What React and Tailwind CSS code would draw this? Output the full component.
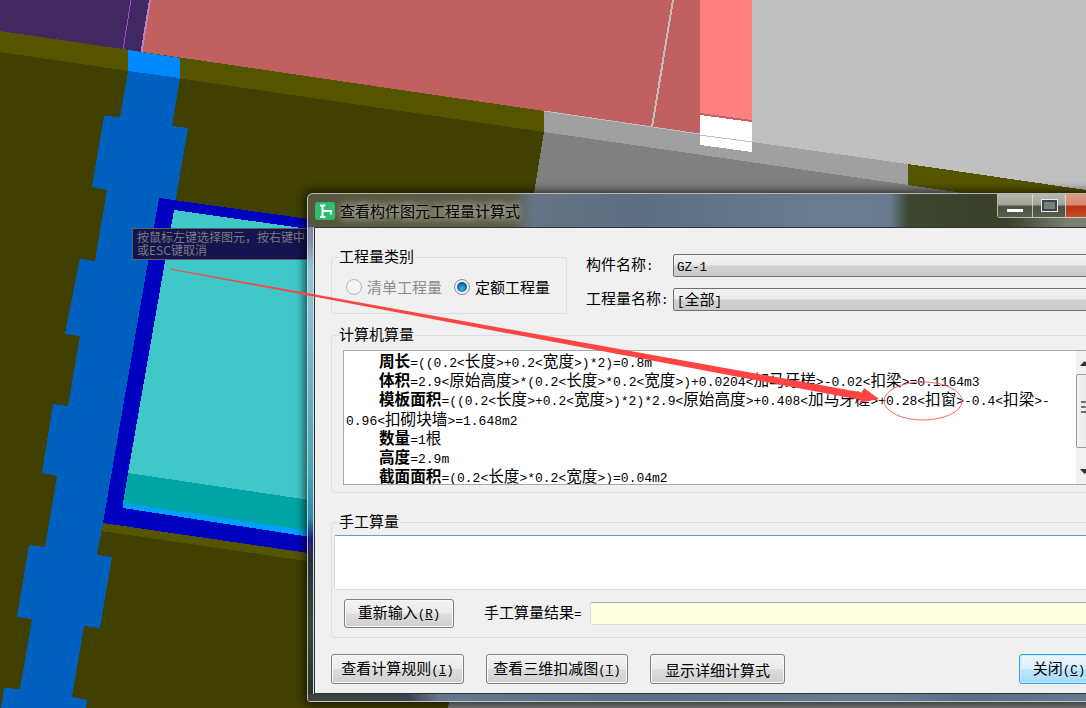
const CJK_FONT = "font-['Noto_Sans_CJK_SC','Noto_Sans',sans-serif]";

// latin runs are half the width of a hanzi, as in the old bitmap song face
function Txt({text, size = 'text-[12.5px]'}) {
  const parts = text.split(/([\x00-\x7f]+)/).filter(Boolean);
  return parts.map((part, i) =>
    /^[\x00-\x7f]/.test(part) ? (
      <span key={i} className={`font-['Liberation_Mono',monospace] font-normal ${size}`}>{part}</span>
    ) : (
      <span key={i}>{part}</span>
    ),
  );
}

function Scene() {
  return (
    <svg className="absolute inset-0" width="1086" height="708" viewBox="0 0 1086 708" shapeRendering="crispEdges">
      <rect width="1086" height="708" fill="#404000" />
      <polygon points="0,0 700,0 700,134 0,31" fill="#402860" />
      <polygon points="150,0 700,0 700,134 141,52" fill="#c06060" />
      <line x1="131" y1="0" x2="123" y2="50" stroke="#a050c0" strokeWidth="1" />
      <line x1="150" y1="0" x2="141.5" y2="52" stroke="#c080c0" strokeWidth="2" />
      <line x1="673" y1="0" x2="652" y2="127" stroke="#c0c0c0" strokeWidth="2" />
      <polygon points="0,31 544,111 544,132 0,52" fill="#555500" />
      <polygon points="700,0 752,0 752,120 700,113" fill="#ff8080" />
      <polygon points="700,113 752,120 752,122 700,115" fill="#c06060" />
      <polygon points="700,115 752,122 752,152 700,145" fill="#ffffff" />
      <line x1="700" y1="135" x2="752" y2="142" stroke="#c0c0c0" strokeWidth="1" />
      <polygon points="752,0 1086,0 1086,190 908,164 752,142" fill="#c0c0c0" />
      <polygon points="544,111 700,134 700,145 752,152 752,142 908,164 908,185 544,132" fill="#a0a0a0" />
      <line x1="544" y1="111" x2="700" y2="134" stroke="#c0c0c0" strokeWidth="1" />
      <polygon points="544,132 908,185 1086,211 1086,708 448,708 534,193" fill="#808080" />
      <polygon points="908,164 1086,190 1086,211 908,185" fill="#555500" />
      <polygon points="128,50 180,58 180,78 128,71" fill="#0088ff" />
      <polygon
        points="128,71 180,78 172,126 188,128 176,198 140,320 97,555 112,557 100,628 84,626 72,697 87,700 86,708 1,708 4,688 20,689 32,619 17,617 29,545 45,547 57,476 42,473 53,404 68,406 80,336 65,334 80,259 95,261 107,190 92,187 104,116 120,117"
        fill="#0060c0"
      />
      <polygon points="103,523 307,553 307,561 101,531" fill="#555500" />
      <polygon points="159,198 330,222 330,556 103,523" fill="#0000c0" />
      <polygon points="174,210 330,232 330,503 128,473" fill="#40c8c8" />
      <polygon points="128,473 330,503 330,534 123,503" fill="#00a4a4" />
      <polygon points="123,503 330,534 330,540 123,508" fill="#00a0ff" />
    </svg>
  );
}

function Overlay() {
  return (
    <svg className="absolute inset-0 pointer-events-none" width="1086" height="708" viewBox="0 0 1086 708">
      <polygon points="170,268.5 862,392.5 864,388 879,399 859,403 861,400 170,269.5" fill="#ff4444" />
      <ellipse cx="923" cy="401" rx="39" ry="19" fill="none" stroke="#ff6666" strokeWidth="1" />
    </svg>
  );
}

function Hint() {
  return (
    <div className={`absolute left-[132px] top-[228px] w-[240px] h-[32px] border border-[#606060] bg-[#141450] pl-1 pt-[1px] text-[12px] leading-[13px] text-[#7c7c7c] ${CJK_FONT}`}>
      <div className="whitespace-nowrap">按鼠标左键选择图元，按右键中</div>
      <div className="whitespace-nowrap">或ESC键取消</div>
    </div>
  );
}

function CaptionButtons() {
  return (
    <div className="absolute left-[689px] top-0 flex h-[24px] border border-t-0 border-[#e8ece4]/70 rounded-b-[3px]">
      <div className="flex w-[35px] items-end justify-center border-r border-[#e8ece4]/70 bg-[linear-gradient(180deg,#b4b8ac_0%,#a2a69a_45%,#4b5140_55%,#5a6050_100%)] pb-[5px]">
        <div className="h-[3px] w-[16px] bg-white" />
      </div>
      <div className="flex w-[33px] items-start justify-center border-r border-[#e8ece4]/70 bg-[linear-gradient(180deg,#b4b8ac_0%,#a2a69a_45%,#4b5140_55%,#5a6050_100%)] pt-[6px]">
        <div className="h-[11px] w-[15px] border-2 border-[#3c4658] bg-[#7b8272] outline outline-1 outline-[#e8ece8]" />
      </div>
      <div className="w-[50px] bg-[linear-gradient(180deg,#df9a86_0%,#d98a76_45%,#bb3210_55%,#c24e2a_100%)]" />
    </div>
  );
}

function Group({title, className, children}) {
  return (
    <fieldset className={`rounded-[3px] border border-[#d6e0e6] ${className}`}>
      <legend className="ml-[7px] h-[16px] pr-px text-[15px] leading-[13px]">{title}</legend>
      {children}
    </fieldset>
  );
}

function Button({children, className}) {
  return (
    <button className={`flex items-center justify-center rounded-[3px] border border-[#7f7f7f] bg-[linear-gradient(180deg,#f2f2f2_0%,#ebebeb_48%,#dddddd_52%,#cfcfcf_100%)] text-[15px] shadow-[inset_0_0_0_1px_#f8f8f8] ${className}`}>
      {children}
    </button>
  );
}

function Hotkey({label, letter}) {
  return (
    <span>
      {label}
      <span className="font-['Liberation_Mono',monospace] text-[12.5px]">
        (<u>{letter}</u>)
      </span>
    </span>
  );
}

function Radio({checked, disabled, label}) {
  return (
    <div className={`flex items-center gap-[5px] ${disabled ? 'text-[#8c8c8c]' : 'text-black'}`}>
      <span className={`flex h-[16px] w-[16px] items-center justify-center rounded-full border ${disabled ? 'border-[#b8b8b8] bg-[#f4f4f4]' : 'border-[#8a8f96] bg-[#eef2f5]'}`}>
        {checked && <span className="h-[10px] w-[10px] rounded-full bg-[radial-gradient(circle_at_50%_65%,#3cb8f0_0%,#0f6ea8_55%,#0c3f66_100%)]" />}
      </span>
      <span>{label}</span>
    </div>
  );
}

function Combo({label, value}) {
  return (
    <div className="flex items-center">
      <span className="w-[87px] shrink-0"><Txt text={label} /></span>
      <div className="h-[23px] flex-1 rounded-[2px] border border-[#707070] bg-[linear-gradient(180deg,#f2f2f2_0%,#ebebeb_48%,#d2d2d2_52%,#cacaca_100%)] pl-[3px] leading-[20px]">
        <Txt text={value} />
      </div>
    </div>
  );
}

const FORMULA = [
  {name: '周长', rest: '=((0.2<长度>+0.2<宽度>)*2)=0.8m'},
  {name: '体积', rest: '=2.9<原始高度>*(0.2<长度>*0.2<宽度>)+0.0204<加马牙槎>-0.02<扣梁>=0.1164m3'},
  {name: '模板面积', rest: '=((0.2<长度>+0.2<宽度>)*2)*2.9<原始高度>+0.408<加马牙槎>+0.28<扣窗>-0.4<扣梁>-'},
  {rest: '0.96<扣砌块墙>=1.648m2'},
  {name: '数量', rest: '=1根'},
  {name: '高度', rest: '=2.9m'},
  {name: '截面面积', rest: '=(0.2<长度>*0.2<宽度>)=0.04m2'},
];

function Scrollbar() {
  return (
    <div className="flex w-[17px] shrink-0 flex-col items-center bg-[#f2f2f2] pt-[10px]">
      <svg width="9" height="5" viewBox="0 0 9 5"><polygon points="4.5,0 9,5 0,5" fill="#303030" /></svg>
      <div className="mt-[8px] flex h-[74px] w-full flex-col justify-center gap-[3px] rounded-[2px] border border-[#9a9a9a] bg-[linear-gradient(90deg,#f4f4f4,#e4e4e4)] pb-[8px] pl-[4px]">
        <div className="h-[2px] w-[9px] bg-[#707070]" />
        <div className="h-[2px] w-[9px] bg-[#707070]" />
        <div className="h-[2px] w-[9px] bg-[#707070]" />
      </div>
      <svg className="mt-[21px]" width="9" height="5" viewBox="0 0 9 5"><polygon points="0,0 9,0 4.5,5" fill="#303030" /></svg>
    </div>
  );
}

function Dialog() {
  return (
    <div className={`absolute left-[307px] top-[193px] flex h-[509px] w-[825px] flex-col rounded-t-[6px] rounded-b-[4px] border border-[#d8dcdc]/80 text-[15px] leading-[19px] text-black shadow-[0_0_9px_3px_rgba(0,0,0,0.6)] ${CJK_FONT} bg-[linear-gradient(180deg,#6e6e96_0%,#8a8aa8_9%,#92c8d8_15%,#7ab8c8_30%,#4aa4b4_55%,#2e8aa0_64%,#1c2080_68%,#2a3038_72%,#3a4438_85%,#2a3228_100%)]`}>
      <div className="relative flex h-[33px] shrink-0 items-center gap-[5px] rounded-t-[5px] bg-[linear-gradient(90deg,#55563c_0px,#5c5c48_205px,#667484_225px,#5c6e84_330px,#6a7c90_520px,#677a8f_583px,#3d4630_600px,#3a4029_700px,#7a8070_760px)] pl-[7px]">
        <svg width="20" height="18" viewBox="0 0 20 18" className="shrink-0">
          <rect width="20" height="18" rx="3" fill="#2dbd70" />
          <path d="M7.5 3V15.5M5 3.5H10.5M5 15H10.5M7.5 9H16.5M16 8V12.5" stroke="#ffffff" strokeWidth="2" fill="none" />
        </svg>
        <span className="[text-shadow:0_0_6px_rgba(235,235,225,0.85),0_0_12px_rgba(235,235,225,0.6)]">查看构件图元工程量计算式</span>
        <CaptionButtons />
      </div>

      <div className="mx-[6px] flex min-h-0 flex-1 flex-col border border-[#2a3238] bg-[#f0f0f0] px-[16px] pt-[21px] outline outline-1 outline-[#d4dce0]">
        <div className="flex">
          <Group title="工程量类别" className="h-[65px] w-[236px]">
            <div className="mt-[12px] flex gap-[12px] pl-[14px]">
              <Radio disabled label="清单工程量" />
              <Radio checked label="定额工程量" />
            </div>
          </Group>
          <div className="ml-[19px] flex flex-1 flex-col gap-[11px] pt-[5px]">
            <Combo label="构件名称:" value="GZ-1" />
            <Combo label="工程量名称:" value="[全部]" />
          </div>
        </div>

        <Group title="计算机算量" className="mt-[13px] pb-[7px]">
          <div className="ml-[11px] mt-[7px] flex h-[135px] w-[751px] overflow-hidden border border-[#a8a8a8] bg-white text-[15.6px]">
            <div className="min-w-0 flex-1 pl-[2px]">
              {FORMULA.map((row) => (
                <div key={row.rest} className="h-[19.2px] whitespace-nowrap">
                  {row.name && <b className="ml-[33px] font-bold">{row.name}</b>}
                  <Txt text={row.rest} size="text-[13px]" />
                </div>
              ))}
            </div>
            <Scrollbar />
          </div>
        </Group>

        <Group title="手工算量" className="mt-[21px] pb-[9px]">
          <div className="ml-[2px] mr-[2px] mt-[5px] h-[55px] rounded-[2px] border border-[#d0e0ea] border-t-[#6a9cc0] bg-white" />
          <div className="mt-[9px] flex items-center pl-[12px]">
            <Button className="h-[29px] w-[110px]"><Hotkey label="重新输入" letter="R" /></Button>
            <span className="ml-[30px] w-[106px] shrink-0"><Txt text="手工算量结果=" /></span>
            <div className="mr-[2px] h-[23px] flex-1 rounded-[2px] border border-[#dcdcdc] border-t-[#a8a8b0] bg-[#ffffe0]" />
          </div>
        </Group>

        <div className="mt-[16px] flex gap-[22px]">
          <Button className="h-[30px] w-[133px]"><Hotkey label="查看计算规则" letter="I" /></Button>
          <Button className="h-[30px] w-[142px]"><Hotkey label="查看三维扣减图" letter="T" /></Button>
          <Button className="h-[30px] w-[135px]">显示详细计算式</Button>
          <button className="ml-[212px] flex h-[30px] w-[80px] items-center justify-center rounded-[3px] border border-[#2ea6e0] bg-[linear-gradient(180deg,#eaf6fd_0%,#d9f0fc_48%,#bee6fd_52%,#a7d9f5_100%)] text-[15px] shadow-[inset_0_0_0_1px_#bfeaff]">
            <Hotkey label="关闭" letter="C" />
          </button>
        </div>
      </div>

      <div className="h-[7px] shrink-0 rounded-b-[3px] bg-[linear-gradient(90deg,#3a4438_0%,#3c4048_12%,#66788c_16%,#5c6e84_40%,#6a7c90_70%,#5c6e84_80%,#6a7c90_100%)]" />
    </div>
  );
}

export default function App() {
  return (
    <div className="relative h-[708px] w-[1086px] overflow-hidden bg-[#404000]">
      <Scene />
      <Hint />
      <Dialog />
      <Overlay />
    </div>
  );
}
